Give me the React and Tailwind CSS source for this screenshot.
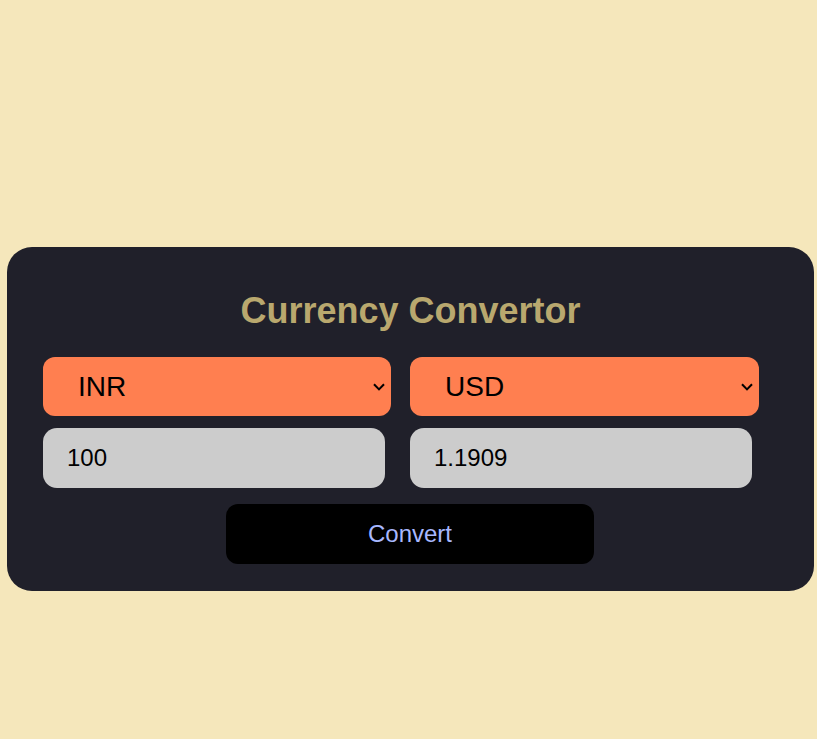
function Chevron() {
  return (
    <svg width="12" height="8" viewBox="0 0 12 8" className="shrink-0">
      <path d="M1 1.2 L6 6.4 L11 1.2" fill="none" stroke="#000" strokeWidth="2" />
    </svg>
  );
}

function Picker({ value, width }) {
  return (
    <div
      className={`flex items-center justify-between h-[59px] ${width} rounded-[12px] bg-[#ff7f50] pl-[35px] pr-[6px] text-[28px] leading-none text-black`}
    >
      <span>{value}</span>
      <Chevron />
    </div>
  );
}

function Field({ value }) {
  return (
    <div className="flex items-center h-[60px] w-[342px] rounded-[14px] bg-[#cccccc] px-[24px] text-[24px] leading-none text-black">
      {value}
    </div>
  );
}

export default function App() {
  return (
    <div className="min-h-[739px] bg-[#f5e7bb] pt-[247px] font-['Liberation_Sans',Arial,sans-serif]">
      <div className="ml-[7px] w-[807px] h-[344px] rounded-[25px] bg-[#20202a] pt-[44px] pl-[36px]">
        <h1 className="h-[40px] pr-[36px] text-center text-[36px] leading-[40px] font-bold text-[#b9a86e]">
          Currency Convertor
        </h1>
        <div className="mt-[26px] flex gap-[19px]">
          <Picker value="INR" width="w-[348px]" />
          <Picker value="USD" width="w-[349px]" />
        </div>
        <div className="mt-[12px] flex gap-[25px]">
          <Field value="100" />
          <Field value="1.1909" />
        </div>
        <div className="mt-[16px] pl-[183px]">
          <button className="h-[60px] w-[368px] rounded-[12px] bg-black text-[24px] leading-none text-[#a8b8ff]">
            Convert
          </button>
        </div>
      </div>
    </div>
  );
}
